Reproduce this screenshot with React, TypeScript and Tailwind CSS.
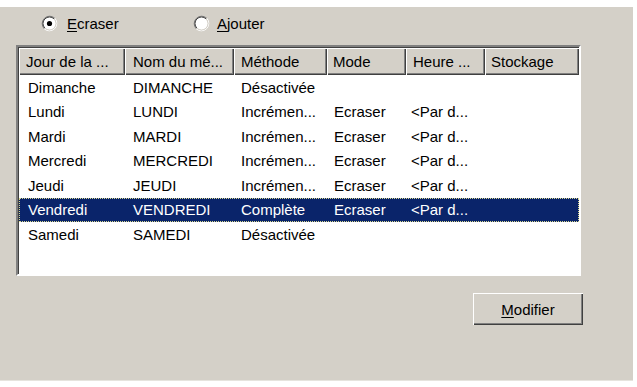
import React from "react";

const cols = [
  { w: 106, h: "Jour de la ...", pad: 9, hpad: 7 },
  { w: 109, h: "Nom du mé...", pad: 8, hpad: 8 },
  { w: 93, h: "Méthode", pad: 7, hpad: 7 },
  { w: 79, h: "Mode", pad: 7, hpad: 6 },
  { w: 79, h: "Heure ...", pad: 5, hpad: 7 },
  { w: 94, h: "Stockage", pad: 7, hpad: 6 },
];

const rows: string[][] = [
  ["Dimanche", "DIMANCHE", "Désactivée", "", "", ""],
  ["Lundi", "LUNDI", "Incrémen...", "Ecraser", "<Par d...", ""],
  ["Mardi", "MARDI", "Incrémen...", "Ecraser", "<Par d...", ""],
  ["Mercredi", "MERCREDI", "Incrémen...", "Ecraser", "<Par d...", ""],
  ["Jeudi", "JEUDI", "Incrémen...", "Ecraser", "<Par d...", ""],
  ["Vendredi", "VENDREDI", "Complète", "Ecraser", "<Par d...", ""],
  ["Samedi", "SAMEDI", "Désactivée", "", "", ""],
];

function Radio({ checked }: { checked: boolean }) {
  return (
    <svg width="17" height="17" viewBox="0 0 17 17" className="shrink-0">
      <circle cx="8.5" cy="8.5" r="6.5" fill="#fff" />
      <path d="M3.2 13.8 A7.5 7.5 0 0 1 13.8 3.2" stroke="#808080" strokeWidth="1" fill="none" />
      <path d="M13.8 3.2 A7.5 7.5 0 0 1 3.2 13.8" stroke="#ffffff" strokeWidth="1" fill="none" />
      <path d="M3.9 13.1 A6.5 6.5 0 0 1 13.1 3.9" stroke="#404040" strokeWidth="1" fill="none" />
      <path d="M13.1 3.9 A6.5 6.5 0 0 1 3.9 13.1" stroke="#d4d0c8" strokeWidth="1" fill="none" />
      {checked && <circle cx="8.5" cy="8.5" r="2.6" fill="#000" />}
    </svg>
  );
}

export default function App() {
  return (
    <div className="w-[637px] h-[387px] bg-white pt-[7px] font-['Liberation_Sans',Arial,sans-serif] text-[15px] text-black leading-none">
      <div className="w-[633px] h-[374px] bg-[#d4d0c8] border-b border-[#e6e4de] flex flex-col">
        {/* radios */}
        <div className="mt-[8px] h-[17px] flex items-center pl-[41px]">
          <div className="w-[152px] flex items-center gap-[9px]">
            <Radio checked />
            <span>
              <span className="underline underline-offset-2">E</span>craser
            </span>
          </div>
          <div className="flex items-center gap-[7px]">
            <Radio checked={false} />
            <span>
              <span className="underline underline-offset-2">A</span>jouter
            </span>
          </div>
        </div>

        {/* list view */}
        <div className="mt-[13px] ml-[16px] w-[565px] h-[231px] border-2 border-t-[#808080] border-l-[#808080] border-r-white border-b-white">
          <div className="w-full h-full border-t border-l border-t-[#404040] border-l-[#404040] bg-white flex flex-col overflow-hidden">
            <div className="flex h-[27px] shrink-0 bg-[#d4d0c8]">
              {cols.map((c, i) => (
                <div
                  key={i}
                  style={{ width: c.w, paddingLeft: c.hpad }}
                  className="h-full flex items-center shrink-0 shadow-[inset_1px_1px_0_#ffffff,inset_-1px_-1px_0_#404040,inset_-2px_-2px_0_#808080] whitespace-nowrap overflow-hidden"
                >
                  {c.h}
                </div>
              ))}
              <div className="flex-1 h-full shadow-[inset_1px_1px_0_#ffffff,inset_0_-1px_0_#404040,inset_0_-2px_0_#808080]" />
            </div>
            {rows.map((r, ri) => {
              const sel = ri === 5;
              return (
                <div
                  key={ri}
                  className={
                    "flex h-[24.5px] shrink-0 w-[560px] " +
                    (sel
                      ? "bg-[#0a246a] text-white outline outline-1 outline-dotted outline-[#d8d890] -outline-offset-1"
                      : "")
                  }
                >
                  {cols.map((c, ci) => (
                    <div
                      key={ci}
                      style={{ width: c.w, paddingLeft: c.pad }}
                      className="h-full flex items-center shrink-0 whitespace-nowrap overflow-hidden"
                    >
                      {r[ci]}
                    </div>
                  ))}
                </div>
              );
            })}
          </div>
        </div>

        {/* button */}
        <div className="flex justify-end pr-[50px] mt-[17px]">
          <button className="w-[110px] h-[32px] bg-[#d4d0c8] flex items-center justify-center shadow-[inset_1px_1px_0_#ffffff,inset_-1px_-1px_0_#404040,inset_-2px_-2px_0_#808080] text-[15px]">
            <span>
              <span className="underline underline-offset-2">M</span>odifier
            </span>
          </button>
        </div>
      </div>
    </div>
  );
}
